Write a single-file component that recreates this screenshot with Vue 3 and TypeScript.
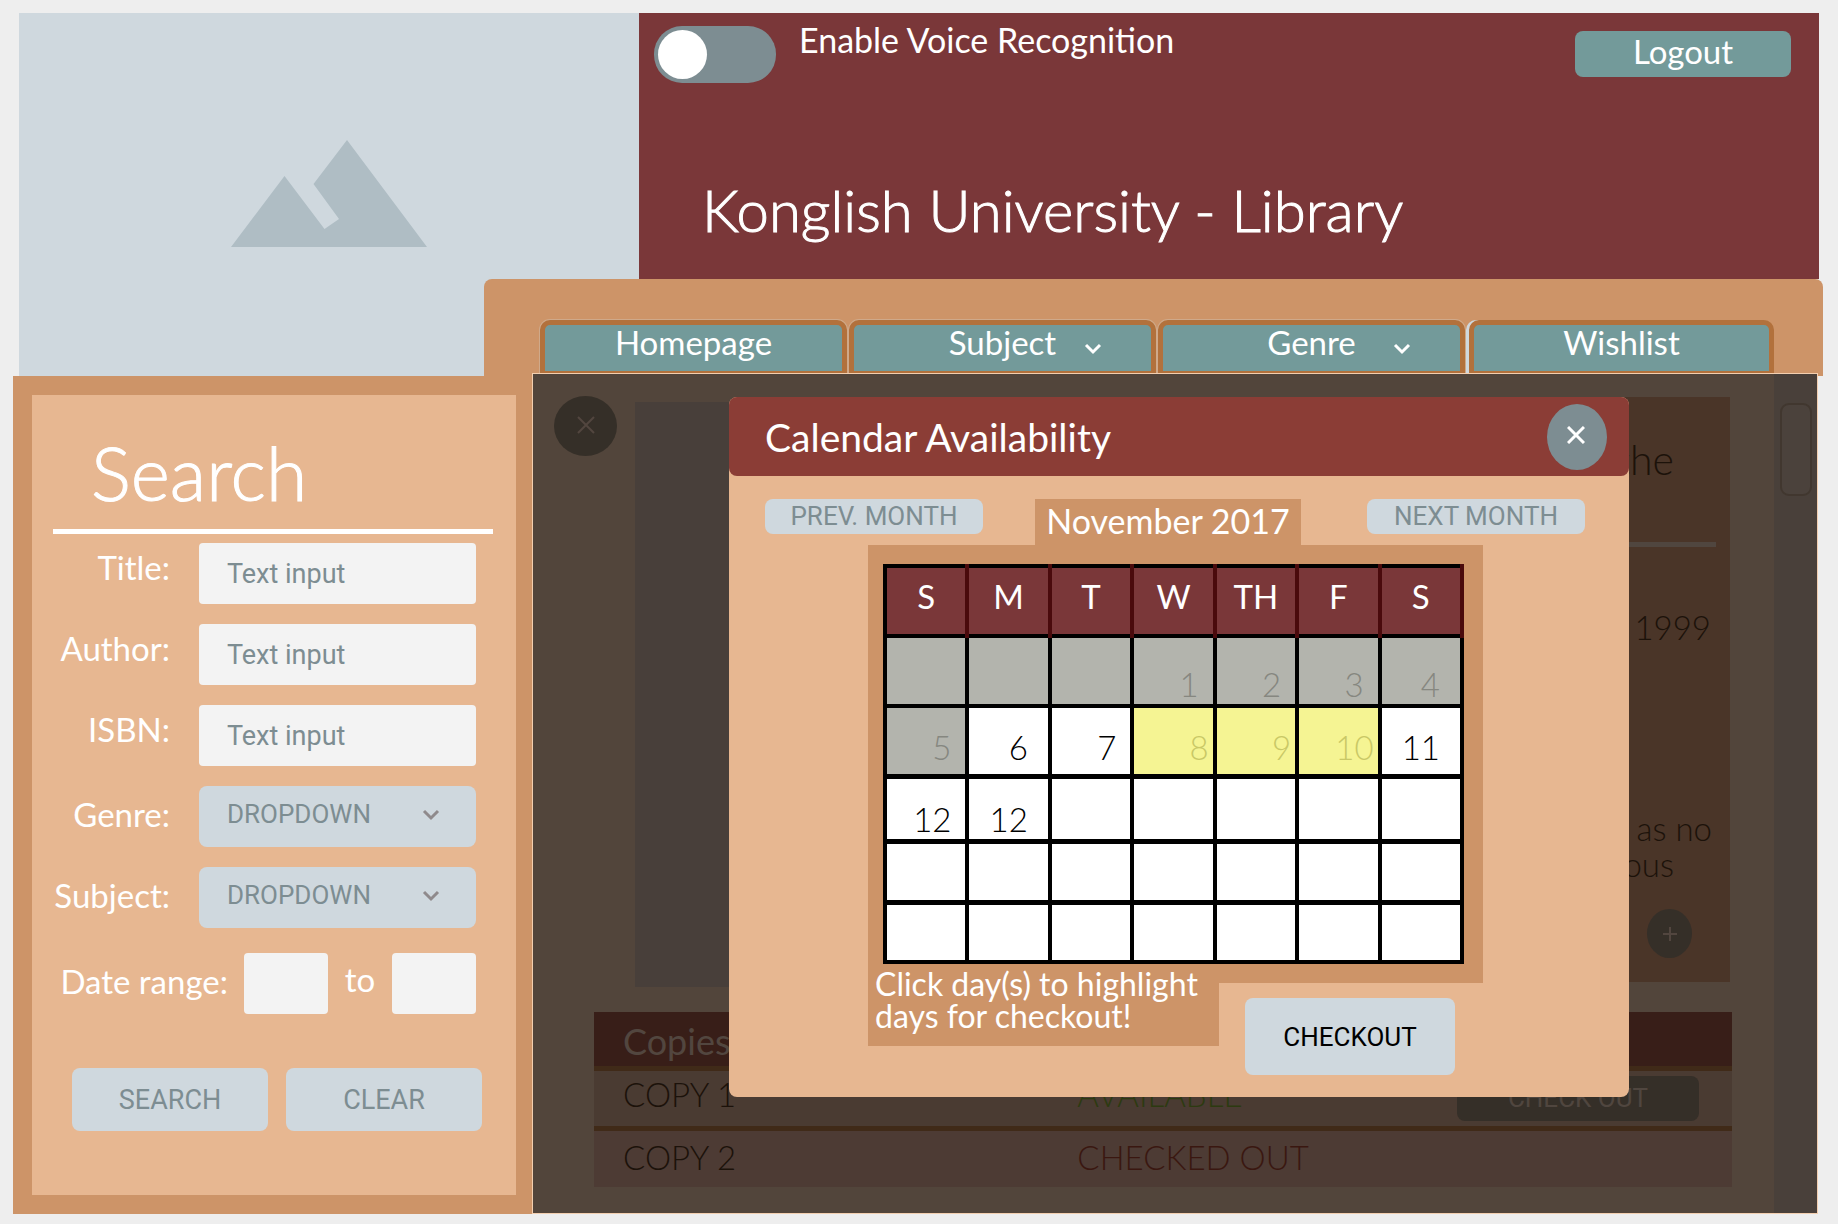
<script setup lang="ts">
import { ref } from 'vue'

interface Tab {
  label: string
  menu: boolean
}

interface Day {
  label: string
  state: 'past' | 'open' | 'picked'
}

interface Copy {
  name: string
  status: string
  available: boolean
}

const tabs: Tab[] = [
  { label: 'Homepage', menu: false },
  { label: 'Subject', menu: true },
  { label: 'Genre', menu: true },
  { label: 'Wishlist', menu: false },
]

const textFields = ['Title', 'Author', 'ISBN']
const listFields = ['Genre', 'Subject']
const weekdays = ['S', 'M', 'T', 'W', 'TH', 'F', 'S']

const labels: string[][] = [
  ['', '', '', '1', '2', '3', '4'],
  ['5', '6', '7', '8', '9', '10', '11'],
  ['12', '12', '', '', '', '', ''],
  ['', '', '', '', '', '', ''],
  ['', '', '', '', '', '', ''],
]

const stateOf = (week: number, day: number): Day['state'] => {
  if (week === 0 || (week === 1 && day === 0)) return 'past'
  return week === 1 && day > 2 && day < 6 ? 'picked' : 'open'
}

const weeks: Day[][] = labels.map((row, w) =>
  row.map((label, d) => ({ label, state: stateOf(w, d) })),
)

const copies: Copy[] = [
  { name: 'COPY 1', status: 'AVAILABLE', available: true },
  { name: 'COPY 2', status: 'CHECKED OUT', available: false },
]

const voice = ref(false)
</script>

<template>
  <div class="page">
    <header class="top">
      <div class="picture">
        <svg class="mountains" viewBox="0 0 196 108" aria-hidden="true">
          <path d="M0 107 L53.5 36 L93.5 89 L108 79 L82.5 44 L116 0 L196 107 Z" />
        </svg>
      </div>
      <div class="banner">
        <div class="banner-row">
          <label class="voice">
            <input v-model="voice" class="toggle" type="checkbox" />
            <span>Enable Voice Recognition</span>
          </label>
          <button class="logout" type="button">Logout</button>
        </div>
        <h1>Konglish University - Library</h1>
      </div>
      <nav class="tabs">
        <a v-for="tab in tabs" :key="tab.label" class="tab" href="#">
          <span class="tab-label">{{ tab.label }}</span>
          <svg v-if="tab.menu" class="tab-chevron" viewBox="0 0 18 12" aria-hidden="true">
            <path d="M2 2 L9 9 L16 2" />
          </svg>
        </a>
      </nav>
    </header>

    <div class="workspace">
      <aside class="sidebar">
        <form class="search" @submit.prevent>
          <h2>Search</h2>
          <div class="fields">
            <div v-for="name in textFields" :key="name" class="field">
              <label class="raised" :for="'text-' + name">{{ name }}:</label>
              <input :id="'text-' + name" type="text" placeholder="Text input" />
            </div>
            <div v-for="name in listFields" :key="name" class="field">
              <label :for="'list-' + name">{{ name }}:</label>
              <div class="drop">
                <select :id="'list-' + name">
                  <option>DROPDOWN</option>
                </select>
                <svg class="drop-chevron" viewBox="0 0 18 12" aria-hidden="true">
                  <path d="M2 2 L9 9 L16 2" />
                </svg>
              </div>
            </div>
            <div class="dates">
              <label for="date-from">Date range:</label>
              <input id="date-from" type="text" />
              <label class="to" for="date-to">to</label>
              <input id="date-to" type="text" />
            </div>
          </div>
          <div class="actions">
            <button type="submit">SEARCH</button>
            <button type="reset">CLEAR</button>
          </div>
        </form>
      </aside>

      <main class="main">
        <div class="behind">
          <div class="book">
            <button class="dim-close" type="button" aria-label="Close">
              <svg viewBox="0 0 18 18" aria-hidden="true"><path d="M1 1 L17 17 M17 1 L1 17" /></svg>
            </button>
            <div class="cover"></div>
            <section class="details">
              <h2>the</h2>
              <p class="year">1999</p>
              <p class="about">as no<br /><span>ous</span></p>
              <button class="add" type="button" aria-label="Add">
                <svg viewBox="0 0 14 14" aria-hidden="true"><path d="M7 0 V14 M0 7 H14" /></svg>
              </button>
            </section>
          </div>
          <table class="copies">
            <thead>
              <tr><th colspan="3">Copies</th></tr>
            </thead>
            <tbody>
              <tr v-for="copy in copies" :key="copy.name">
                <td>{{ copy.name }}</td>
                <td :class="copy.available ? 'free' : 'taken'">{{ copy.status }}</td>
                <td class="act">
                  <button v-if="copy.available" type="button">CHECK OUT</button>
                </td>
              </tr>
            </tbody>
          </table>
        </div>
        <div class="track"><div class="thumb"></div></div>

        <div class="layer">
          <div class="modal" role="dialog" aria-labelledby="modal-title">
            <div class="modal-head">
              <h2 id="modal-title">Calendar Availability</h2>
              <button class="close" type="button" aria-label="Close">
                <svg viewBox="0 0 18 18" aria-hidden="true"><path d="M1 1 L17 17 M17 1 L1 17" /></svg>
              </button>
            </div>
            <div class="months">
              <button type="button">PREV. MONTH</button>
              <div class="month">November 2017</div>
              <button type="button">NEXT MONTH</button>
            </div>
            <div class="calendar">
              <table>
                <thead>
                  <tr>
                    <th v-for="(day, i) in weekdays" :key="i" scope="col">{{ day }}</th>
                  </tr>
                </thead>
                <tbody>
                  <tr v-for="(week, w) in weeks" :key="w">
                    <td v-for="(day, d) in week" :key="d" :class="day.state">{{ day.label }}</td>
                  </tr>
                </tbody>
              </table>
            </div>
            <div class="foot">
              <p class="hint">Click day(s) to highlight days for checkout!</p>
              <button class="checkout" type="button">CHECKOUT</button>
            </div>
          </div>
        </div>
      </main>
    </div>
  </div>
</template>

<style>
body {
  margin: 0;
  background: #eeeeee;
}
</style>

<style scoped>
.page {
  padding: 13px 15px 8px 13px;
  font-family: Lato, "Open Sans", sans-serif;
  font-size: 33px;
  font-weight: 400;
  line-height: 40px;
  color: #ffffff;
}

.page *,
.page *::before {
  box-sizing: border-box;
}

h1,
h2,
p {
  margin: 0;
  font-weight: 400;
}

button,
input,
select {
  margin: 0;
  border: 0;
  font-family: Roboto, sans-serif;
  font-size: 27px;
  font-weight: 400;
  line-height: 32px;
}

svg {
  display: block;
  fill: none;
}

/* Header */
.top {
  display: grid;
  grid-template-columns: 465px 155px minmax(0, 1fr) 4px;
  grid-template-rows: 266px 97px;
  margin-left: 6px;
}

.picture {
  grid-area: 1 / 1 / 3 / 3;
  padding: 127px 0 0 212px;
  background: #cfd8de;
}

.mountains {
  width: 196px;
  height: 108px;
  fill: #afbdc4;
}

.banner {
  grid-area: 1 / 3 / 2 / 4;
  background: #7a3739;
}

.banner-row {
  display: flex;
  justify-content: space-between;
  align-items: flex-start;
  padding: 13px 28px 0 15px;
}

.voice {
  display: flex;
  gap: 23px;
  font-size: 34px;
  line-height: 28px;
}

.toggle {
  width: 122px;
  height: 57px;
  padding: 4px;
  border-radius: 28px;
  background: #7d8d92;
  appearance: none;
}

.toggle::before {
  content: "";
  display: block;
  width: 49px;
  height: 49px;
  border-radius: 50%;
  background: #ffffff;
}

.logout {
  width: 216px;
  height: 46px;
  margin-top: 5px;
  padding: 0 0 6px;
  border-radius: 8px;
  background: #739a9a;
  color: #ffffff;
  font-family: Lato, sans-serif;
  font-size: 33px;
}

h1 {
  margin-top: 95px;
  padding-left: 63px;
  font-size: 58px;
  font-weight: 300;
  line-height: 64px;
  -webkit-text-stroke: 1px #ffffff;
}

.tabs {
  grid-area: 2 / 2 / 3 / 5;
  display: grid;
  grid-template-columns: repeat(4, minmax(0, 1fr));
  gap: 2px;
  align-items: end;
  padding: 0 49px 3px 56px;
  border-radius: 8px 8px 0 0;
  background: #cd9468;
}

.tab {
  display: grid;
  grid-template-columns: 1fr auto 1fr;
  height: 53px;
  border: 5px solid #b2713c;
  border-bottom-width: 2px;
  border-radius: 10px 10px 0 0;
  background: #739a9a;
  box-shadow: 0 0 0 1px #cfa98a;
  color: #ffffff;
  text-decoration: none;
}

.tab:last-child {
  margin-left: 2px;
  box-shadow: -3px 0 0 #cfd8de;
}

.tab-label {
  grid-column: 2;
  line-height: 34px;
}

.tab-chevron {
  justify-self: end;
  width: 18px;
  height: 12px;
  margin: 18px 49px 0 0;
  stroke: #ffffff;
  stroke-width: 3;
}

/* Workspace */
.workspace {
  display: grid;
  grid-template-columns: 519px minmax(0, 1fr);
}

.sidebar {
  display: grid;
  padding: 19px 16px 19px 19px;
  background: #cd9468;
}

.search {
  padding: 39px 23px 64px 0;
  background: #e7b791;
}

.search h2 {
  margin-left: 21px;
  padding: 0 0 18px 38px;
  border-bottom: 5px solid #ffffff;
  font-size: 75px;
  font-weight: 300;
  line-height: 77px;
  -webkit-text-stroke: 1px #ffffff;
}

.fields {
  display: grid;
  gap: 20px;
  margin: 9px 17px 0 0;
}

.field {
  display: grid;
  grid-template-columns: 138px minmax(0, 1fr);
  column-gap: 29px;
  align-items: center;
}

.field label {
  padding-bottom: 5px;
  text-align: right;
}

.field .raised {
  padding-bottom: 14px;
}

.fields input {
  width: 100%;
  height: 61px;
  padding: 0 28px;
  border-radius: 4px;
  background: #f3f3f3;
  color: #7d8d92;
}

.fields input::placeholder {
  color: #7d8d92;
  opacity: 1;
}

.drop {
  position: relative;
}

select {
  width: 100%;
  height: 61px;
  padding: 0 28px 6px;
  border-radius: 8px;
  background: #cfd8de;
  color: #7d8d92;
  font-size: 26px;
  appearance: none;
}

.drop-chevron {
  position: absolute;
  top: 23px;
  right: 36px;
  width: 18px;
  height: 12px;
  stroke: #8f8a8c;
  stroke-width: 3;
}

.dates {
  display: grid;
  grid-template-columns: 197px 84px 1fr 84px;
  align-items: center;
  margin: 5px 0 0 12px;
  padding-left: 3px;
}

.dates label {
  padding: 0 16px 5px 0;
  text-align: right;
}

.dates .to {
  padding: 0 0 9px;
  text-align: center;
}

.actions {
  display: flex;
  gap: 18px;
  margin: 54px 11px 0 40px;
}

.actions button {
  flex: 1;
  height: 63px;
  border-radius: 8px;
  background: #cfd8de;
  color: #7d8d92;
}

/* Catalogue page under the dialog */
.main {
  position: relative;
  display: grid;
  grid-template-columns: minmax(0, 1fr) 43px;
  margin: -3px 5px 0 0;
  border: 1px solid #f3cfb0;
  background: #52453b;
}

.behind {
  padding: 22px 42px 22px 61px;
  font-weight: 300;
}

.book {
  display: grid;
  grid-template-columns: 63px 400px minmax(0, 1fr);
  column-gap: 18px;
  margin: 0 2px 0 -40px;
}

.dim-close {
  display: grid;
  place-items: center;
  width: 63px;
  height: 60px;
  padding: 0 0 2px;
  border-radius: 50%;
  background: #352f28;
}

.dim-close svg {
  width: 18px;
  height: 18px;
  stroke: #52463f;
  stroke-width: 2;
}

.cover {
  height: 585px;
  margin-top: 6px;
  background: #483f3a;
}

.details {
  display: flex;
  flex-direction: column;
  height: 585px;
  margin-top: 1px;
  padding: 39px 14px 0 0;
  background: #4a3528;
  color: #1c120a;
  text-align: right;
}

.details h2 {
  padding: 0 42px 58px 0;
  border-bottom: 5px solid #50463f;
  font-size: 41px;
  font-weight: 300;
  line-height: 48px;
}

.details p {
  font-weight: 300;
}

.year {
  margin-top: 60px;
  padding-right: 5px;
}

.details .about {
  margin-top: 163px;
  padding-right: 4px;
  line-height: 36px;
}

.about span {
  padding-right: 38px;
}

.add {
  display: grid;
  place-items: center;
  align-self: flex-end;
  width: 45px;
  height: 49px;
  margin: 27px 24px 0 0;
  padding: 0;
  border-radius: 50%;
  background: #352f28;
}

.add svg {
  width: 14px;
  height: 14px;
  stroke: #52463f;
  stroke-width: 2;
}

.copies {
  width: 100%;
  margin-top: 25px;
  border-collapse: collapse;
  table-layout: fixed;
  color: #1c120a;
}

.copies th {
  height: 56px;
  padding: 4px 0 0 29px;
  background: #381e18;
  color: #52463f;
  font-size: 36px;
  font-weight: 400;
  text-align: left;
}

.copies td {
  height: 60px;
  padding: 0 0 8px;
  border-top: 5px solid #402a18;
  background: #4a3b32;
}

.copies tr:last-child td {
  height: 59px;
  padding-bottom: 4px;
  background: #4d3b34;
}

.copies td:first-child {
  padding-left: 29px;
}

.copies td:nth-child(2) {
  padding-left: 104px;
}

.copies .free {
  color: #2c3a10;
}

.copies .taken {
  color: #3a1710;
}

.copies .act {
  padding: 0 33px 0 0;
}

.act button {
  display: block;
  width: 242px;
  height: 45px;
  margin-left: auto;
  border-radius: 8px;
  background: #352f28;
  color: #50463f;
  font-size: 26px;
}

.track {
  padding: 29px 5px 0 6px;
  background: #49403a;
}

.thumb {
  height: 93px;
  border: 2px solid #41372f;
  border-radius: 9px;
  background: #4b423c;
}

/* Dialog */
.layer {
  position: absolute;
  inset: 0;
  display: flex;
  align-items: flex-start;
  padding: 23px 188px 0 196px;
}

.modal {
  flex: 1;
  padding-bottom: 22px;
  border-radius: 8px;
  background: #e7b791;
}

.modal-head {
  display: flex;
  justify-content: space-between;
  align-items: center;
  height: 79px;
  padding: 0 22px 0 36px;
  border-radius: 8px;
  background: #8b3d36;
}

.modal-head h2 {
  font-size: 39px;
  line-height: 44px;
}

.close {
  display: grid;
  place-items: center;
  width: 60px;
  height: 66px;
  padding: 0 2px 4px 0;
  border-radius: 50%;
  background: #7d8d92;
}

.close svg {
  width: 18px;
  height: 18px;
  stroke: #ffffff;
  stroke-width: 3;
}

.months {
  display: grid;
  grid-template-columns: 218px minmax(0, 1fr) 218px;
  align-items: start;
  padding: 23px 44px 0 36px;
}

.months button {
  height: 35px;
  padding: 0 0 2px;
  border-radius: 8px;
  background: #cfd8de;
  color: #7d8d92;
  font-size: 26px;
}

.month {
  width: 266px;
  height: 46px;
  margin-left: 52px;
  background: #cd9468;
  font-size: 34px;
  line-height: 44px;
  text-align: center;
}

.calendar {
  margin: 0 146px 0 139px;
  padding: 19px 19px 19px 15px;
  background: #cd9468;
}

.calendar table {
  width: 100%;
  border: 4px solid #000000;
  border-collapse: collapse;
  table-layout: fixed;
  background: #ffffff;
  color: #000000;
  font-weight: 300;
}

.calendar th {
  height: 70px;
  padding: 0 0 10px;
  border: 4px solid #4a0a0c;
  border-top-color: #000000;
  border-bottom: 3px solid #000000;
  background: #7a3739;
  color: #ffffff;
  font-weight: 400;
}

.calendar th:first-child {
  border-left-color: #000000;
}

.calendar td {
  height: 61px;
  padding: 0 14px 0 0;
  border: 4px solid #000000;
  text-align: right;
  vertical-align: bottom;
}

.calendar tbody tr:nth-child(-n + 2) td {
  height: 70px;
}

.calendar tbody tr:nth-child(2) td {
  padding-bottom: 7px;
}

.calendar tbody tr:nth-child(3) td {
  height: 65px;
}

.calendar tbody tr:nth-child(n + 3) td {
  border-top-width: 5px;
}

.calendar tbody tr:last-child td {
  height: 60px;
}

.calendar td:nth-child(2) {
  padding-right: 20px;
}

.calendar td:last-child {
  padding-right: 20px;
}

.calendar .past {
  background: #b3b4ad;
  color: #868780;
}

.calendar .picked {
  padding-right: 4px;
  background: #f5f493;
  color: #c9c866;
}

.foot {
  display: flex;
  align-items: flex-start;
  gap: 26px;
  margin: -19px 146px 0 139px;
}

.hint {
  width: 351px;
  height: 82px;
  padding: 4px 0 0 7px;
  background: #cd9468;
  font-size: 32px;
  line-height: 32px;
}

.checkout {
  width: 210px;
  height: 77px;
  margin-top: 34px;
  border-radius: 8px;
  background: #cfd8de;
  color: #000000;
  font-size: 26px;
}
</style>
